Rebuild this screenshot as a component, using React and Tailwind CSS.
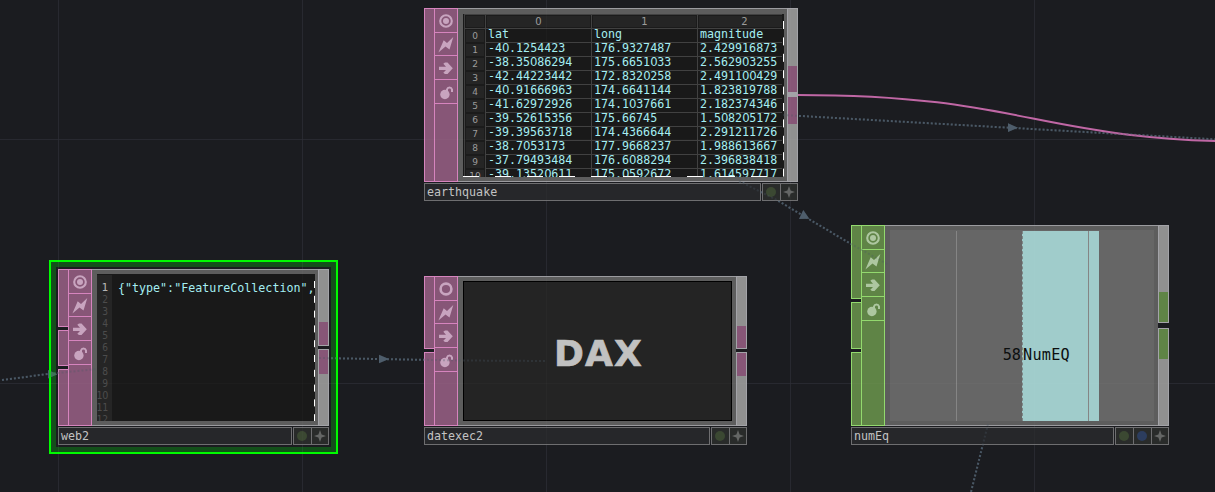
import React from "react";

const ROWS = [
  ["lat", "long", "magnitude"],
  ["-40.1254423", "176.9327487", "2.429916873"],
  ["-38.35086294", "175.6651033", "2.562903255"],
  ["-42.44223442", "172.8320258", "2.491100429"],
  ["-40.91666963", "174.6641144", "1.823819788"],
  ["-41.62972926", "174.1037661", "2.182374346"],
  ["-39.52615356", "175.66745", "1.508205172"],
  ["-39.39563718", "174.4366644", "2.291211726"],
  ["-38.7053173", "177.9668237", "1.988613667"],
  ["-37.79493484", "176.6088294", "2.396838418"],
  ["-39.13520611", "175.0592672", "1.614597717"],
];

const PINK = {
  fill: "bg-[#875677]",
  line: "border-[#d684be]",
  icon: "text-[#c8a4bf]",
};
const GREEN = {
  fill: "bg-[#5f8446]",
  line: "border-[#93d96e]",
  icon: "text-[#adc7a0]",
};

// Monospaced text whose zeros are open, without the inner mark.
function Mono({ children }) {
  return children.split(/(0)/).map((part, i) =>
    part === "0" ? (
      <span key={i} className="font-['DejaVu_Sans',sans-serif] tracking-[-0.4px]">
        0
      </span>
    ) : (
      part
    )
  );
}

function FlagIcon({ kind }) {
  return (
    <svg viewBox="0 0.5 24 24" className="size-6 shrink-0" fill="currentColor">
      {kind === "target" && (
        <>
          <circle cx="12" cy="12.5" r="5.8" fill="none" stroke="currentColor" strokeWidth="2.1" />
          <circle cx="12" cy="12.5" r="3" />
        </>
      )}
      {kind === "ring" && (
        <circle cx="12" cy="12.5" r="5.4" fill="none" stroke="currentColor" strokeWidth="2.6" />
      )}
      {kind === "bolt" && <path d="M4.4 20 9.7 7.7 13 10.6 19.3 4.6 15.5 17 11.5 13.9Z" />}
      {kind === "arrow" && (
        <path d="M5 11.2H12L9.3 8.3 11 7H13.5L18.8 12.8 13.5 18.5H11L9.3 17.2 12 14.6H5Z" />
      )}
      {kind === "lock" && (
        <>
          <circle cx="10.9" cy="15" r="4.7" />
          <path d="M13 12V10A2.6 2.6 0 0 1 18 10V12.5" fill="none" stroke="currentColor" strokeWidth="2" />
        </>
      )}
    </svg>
  );
}

function FlagCell({ kind, tone, size }) {
  return (
    <div className={`flex ${size} w-full shrink-0 items-start justify-center overflow-hidden border-t ${tone.line}`}>
      <FlagIcon kind={kind} />
    </div>
  );
}

function Flags({ tone, first }) {
  return (
    <div className={`flex w-6 shrink-0 flex-col border-x border-b ${tone.fill} ${tone.line} ${tone.icon}`}>
      <FlagCell kind={first} tone={tone} size="h-6" />
      <FlagCell kind="bolt" tone={tone} size="h-[23px]" />
      <FlagCell kind="arrow" tone={tone} size="h-6" />
      <FlagCell kind="lock" tone={tone} size="h-6" />
      <div className={`grow border-t ${tone.line}`} />
    </div>
  );
}

function Inputs({ tone, heights }) {
  return (
    <div className="flex w-2.5 shrink-0 flex-col gap-[3px] bg-[#1b1c20]">
      {heights.map((h, i) => (
        <div key={i} className={`${h} border-y border-l ${tone.fill} ${tone.line}`} />
      ))}
    </div>
  );
}

function Outputs({ tone, top, topPad, bottomFill, gap }) {
  return (
    <div className={`flex w-[11px] shrink-0 flex-col bg-[#1b1c20] ${gap}`}>
      <div className={`${top} flex flex-col border border-[#a3a3a8] bg-[#909090]`}>
        <div className={`${topPad} shrink-0`} />
        <div className={`grow ${tone.fill}`} />
      </div>
      <div className="flex grow flex-col border border-[#a3a3a8] bg-[#909090]">
        <div className={`${bottomFill} ${tone.fill}`} />
      </div>
    </div>
  );
}

function NameBar({ name, dots }) {
  return (
    <div className="mt-px flex h-[18px] gap-px">
      <div className="grow border border-[#6e6e70] bg-[#26272a] pl-[2px] font-['DejaVu_Sans_Mono',monospace] text-[11.66px] leading-[17px] text-[#c3c3c3]">
        {name}
      </div>
      <div className="flex border border-[#6e6e70] bg-[#292b2a]">
        {dots.map((dot) => (
          <div key={dot} className="flex w-[18px] items-center justify-center border-r border-[#6e6e70] pr-px">
            <div className={`size-2.5 rounded-full ${dot}`} />
          </div>
        ))}
        <div className="flex w-4 items-center justify-center">
          <svg viewBox="0 0 12 12" className="size-3">
            <path d="M6 0 7.6 4.4 12 6 7.6 7.6 6 12 4.4 7.6 0 6 4.4 4.4Z" fill="#646665" />
          </svg>
        </div>
      </div>
    </div>
  );
}

function Node({ place, name, dots, tone, first, inputs, outputs, children }) {
  return (
    <div className={`absolute flex flex-col ${place}`}>
      <div className="flex min-h-0 grow">
        <Inputs tone={tone} heights={inputs} />
        <Flags tone={tone} first={first} />
        <div className="flex min-w-0 grow border-y border-[#9b9b9f] bg-[#5d5d5d]">{children}</div>
        <Outputs tone={tone} {...outputs} />
      </div>
      <NameBar name={name} dots={dots} />
    </div>
  );
}

function EdgeDashes({ className, horizontal, length, dash }) {
  return (
    <svg className={`absolute ${className}`}>
      <line
        x1={horizontal ? 0 : 0.5}
        y1={horizontal ? 0.5 : 0}
        x2={horizontal ? length : 0.5}
        y2={horizontal ? 0.5 : length}
        stroke="#fff"
        strokeWidth="1"
        strokeDasharray={dash}
      />
    </svg>
  );
}

const HEAD =
  "border border-[#1b1b1b] bg-[#252525] text-center font-['DejaVu_Sans',sans-serif] text-[#9c9c9c]";

function EarthquakeTable() {
  return (
    <div className="relative mr-[3px] ml-[5px] mt-[5px] h-[163px] min-w-0 grow bg-[#191919] pl-px">
      <div className="mr-[2px] h-full overflow-hidden">
        <div className="w-[327px] border-l border-[#414141] font-['DejaVu_Sans_Mono',monospace] text-[11.66px] text-[#a5eef2]">
          <div className="grid h-3.5 grid-cols-[20px_106px_106px_94px] border-t border-[#414141]">
            <div className={HEAD} />
            {["0", "1", "2"].map((h) => (
              <div key={h} className="border-l border-[#414141]">
                <div className={`${HEAD} h-[13px] text-[10px] leading-[12px]`}>{h}</div>
              </div>
            ))}
          </div>
          {ROWS.map((row, i) => (
            <div key={i} className="grid h-3.5 grid-cols-[20px_106px_106px_94px] border-t border-[#414141]">
              <div className={`${HEAD} text-[9px] leading-[12px]`}>{i}</div>
              {row.map((v) => (
                <div key={v} className="border-l border-[#414141] pl-[2px] leading-[11px] whitespace-nowrap">
                  <Mono>{v}</Mono>
                </div>
              ))}
            </div>
          ))}
        </div>
      </div>
      <EdgeDashes className="right-0 top-[7px] h-[156px] w-px" length={156} dash="8 8.4" />
      <EdgeDashes className="bottom-0 left-0 h-px w-[310px]" horizontal length={310} dash="16 16" />
    </div>
  );
}

function CodeView() {
  return (
    <div className="relative ml-[5px] mr-[3px] mt-1 flex h-[147px] grow overflow-hidden bg-[#191919] pt-px font-['DejaVu_Sans_Mono',monospace]">
      <div className="w-[15px] shrink-0 bg-[#252525] pt-[7px] text-right text-[9.6px] leading-[12px] text-[#4c4c4c]">
        {Array.from({ length: 12 }, (_, i) => (
          <div key={i} className={i === 0 ? "pr-1 text-[11px] text-[#b5b5b5]" : "pr-1 -ml-1"}>
            <Mono>{String(i + 1)}</Mono>
          </div>
        ))}
      </div>
      <div className="pl-1.5 pt-[6px] text-[11.66px] leading-[14px] whitespace-nowrap text-[#a5eef2]">
        {'{"type":"FeatureCollection",'}
      </div>
      <EdgeDashes className="right-0 top-[7px] h-[140px] w-px" length={140} dash="7 7.8" />
    </div>
  );
}

function DaxView() {
  return (
    <div className="ml-[5px] mr-1 mt-1 flex h-[140px] grow items-center justify-center border border-black bg-[#242424] font-['DejaVu_Sans',sans-serif] text-[36px] font-bold tracking-[1.2px] text-[#c1c1c1] [-webkit-text-stroke:0.7px_#c1c1c1]">
      <span className="mt-[5px] ml-[2px]">DAX</span>
    </div>
  );
}

function ChannelView() {
  return (
    <div className="ml-[5px] mr-1 mt-1 flex h-[191px] grow bg-[#666] pt-px font-['DejaVu_Sans_Mono',monospace] text-[15.2px] text-[#0c0f0f]">
      <div className="w-[67px] border-r border-[#858585]" />
      <div className="w-[65px] pr-px pt-[114px] text-right leading-[20px]">58</div>
      <div className="flex w-[77px] border-l border-dashed border-[#7d8585] bg-[#a0cccb]">
        <div className="w-[66px] shrink-0 border-r border-[#858585] pt-[114px] leading-[20px] tracking-[0.25px]">NumEQ</div>
      </div>
    </div>
  );
}

function Wires({ className }) {
  return (
    <svg viewBox="0 0 1215 492" className={`pointer-events-none absolute inset-0 h-[492px] w-[1215px] ${className}`}>
      <g fill="none" stroke="#4a5865" strokeWidth="2" strokeDasharray="2 2">
        <path d="M2 380 48 374 97 369" />
        <path d="M319 358 463 360.5 546 361" />
        <path d="M739 181 776.7 200 851 244 889 265" />
        <path d="M783 115 1215 139.3" />
        <path d="M988 424 971 492" />
      </g>
      <g fill="#4e5d6b">
        <path d="M48 370V378.5L57.5 374.3Z" />
        <path d="M379 354.7V363.3L389 359Z" />
        <path d="M799 219 803.3 210 809.3 218.7Z" />
        <path d="M1008 123.3V132L1018 127.7Z" />
      </g>
    </svg>
  );
}

function GridLines({ className }) {
  return (
    <svg
      viewBox="0 0 1215 492"
      className={`pointer-events-none absolute inset-0 h-[492px] w-[1215px] ${className}`}
      stroke="currentColor"
      strokeWidth="1"
    >
      {[58.5, 302.5, 546.5, 790.5, 1034.5].map((x) => (
        <line key={x} x1={x} x2={x} y1="0" y2="492" />
      ))}
      {[139.5, 383.5].map((y) => (
        <line key={y} x1="0" x2="1215" y1={y} y2={y} />
      ))}
    </svg>
  );
}

const OLIVE = "bg-[#3b4832]";
const BLUE = "bg-[#2c3d5e]";

export default function App() {
  return (
    <div className="relative h-[492px] w-[1215px] overflow-hidden bg-[#1b1c20]">
      <GridLines className="text-[#24252c]" />
      <Wires className="" />
      <svg viewBox="0 0 1215 492" className="absolute inset-0 h-[492px] w-[1215px]">
        <path d="M797 95C1033 95 1033 142 1268 142" fill="none" stroke="#c067a5" strokeWidth="2" />
      </svg>

      <div className="absolute left-[49px] top-[260px] h-[194px] w-[289px] border-2 border-[#00fb00]">
        <div className="h-full w-full border-[5px] border-[#00d90c]/28" />
      </div>

      <Node
        place="left-[424px] top-[8px] h-[193px] w-[374px]"
        name="earthquake"
        dots={[OLIVE]}
        tone={PINK}
        first="target"
        inputs={["h-full"]}
        outputs={{ top: "h-[86px]", topPad: "h-[57px]", bottomFill: "h-[27px]", gap: "gap-0 *:first:border-b-[2px] *:last:border-t-[3px]" }}
      >
        <EarthquakeTable />
      </Node>

      <Node
        place="left-[58px] top-[269px] h-[176px] w-[271px]"
        name="web2"
        dots={[OLIVE]}
        tone={PINK}
        first="target"
        inputs={["h-[58px]", "h-[36px]", "grow"]}
        outputs={{ top: "h-[77px]", topPad: "h-[52px]", bottomFill: "h-[24px]", gap: "gap-[3px]" }}
      >
        <CodeView />
      </Node>

      <Node
        place="left-[424px] top-[276px] h-[169px] w-[323px]"
        name="datexec2"
        dots={[OLIVE]}
        tone={PINK}
        first="ring"
        inputs={["h-[73px]", "grow"]}
        outputs={{ top: "h-[73px]", topPad: "h-[49px]", bottomFill: "h-[23px]", gap: "gap-[3px]" }}
      >
        <DaxView />
      </Node>

      <Node
        place="left-[851px] top-[225px] h-[220px] w-[318px]"
        name="numEq"
        dots={[OLIVE, BLUE]}
        tone={GREEN}
        first="target"
        inputs={["h-[74px]", "h-[47px]", "grow"]}
        outputs={{ top: "h-[98px]", topPad: "h-[66px]", bottomFill: "h-[30px]", gap: "gap-[5px]" }}
      >
        <ChannelView />
      </Node>

      <GridLines className="text-white/2" />
      <Wires className="opacity-30" />
    </div>
  );
}
